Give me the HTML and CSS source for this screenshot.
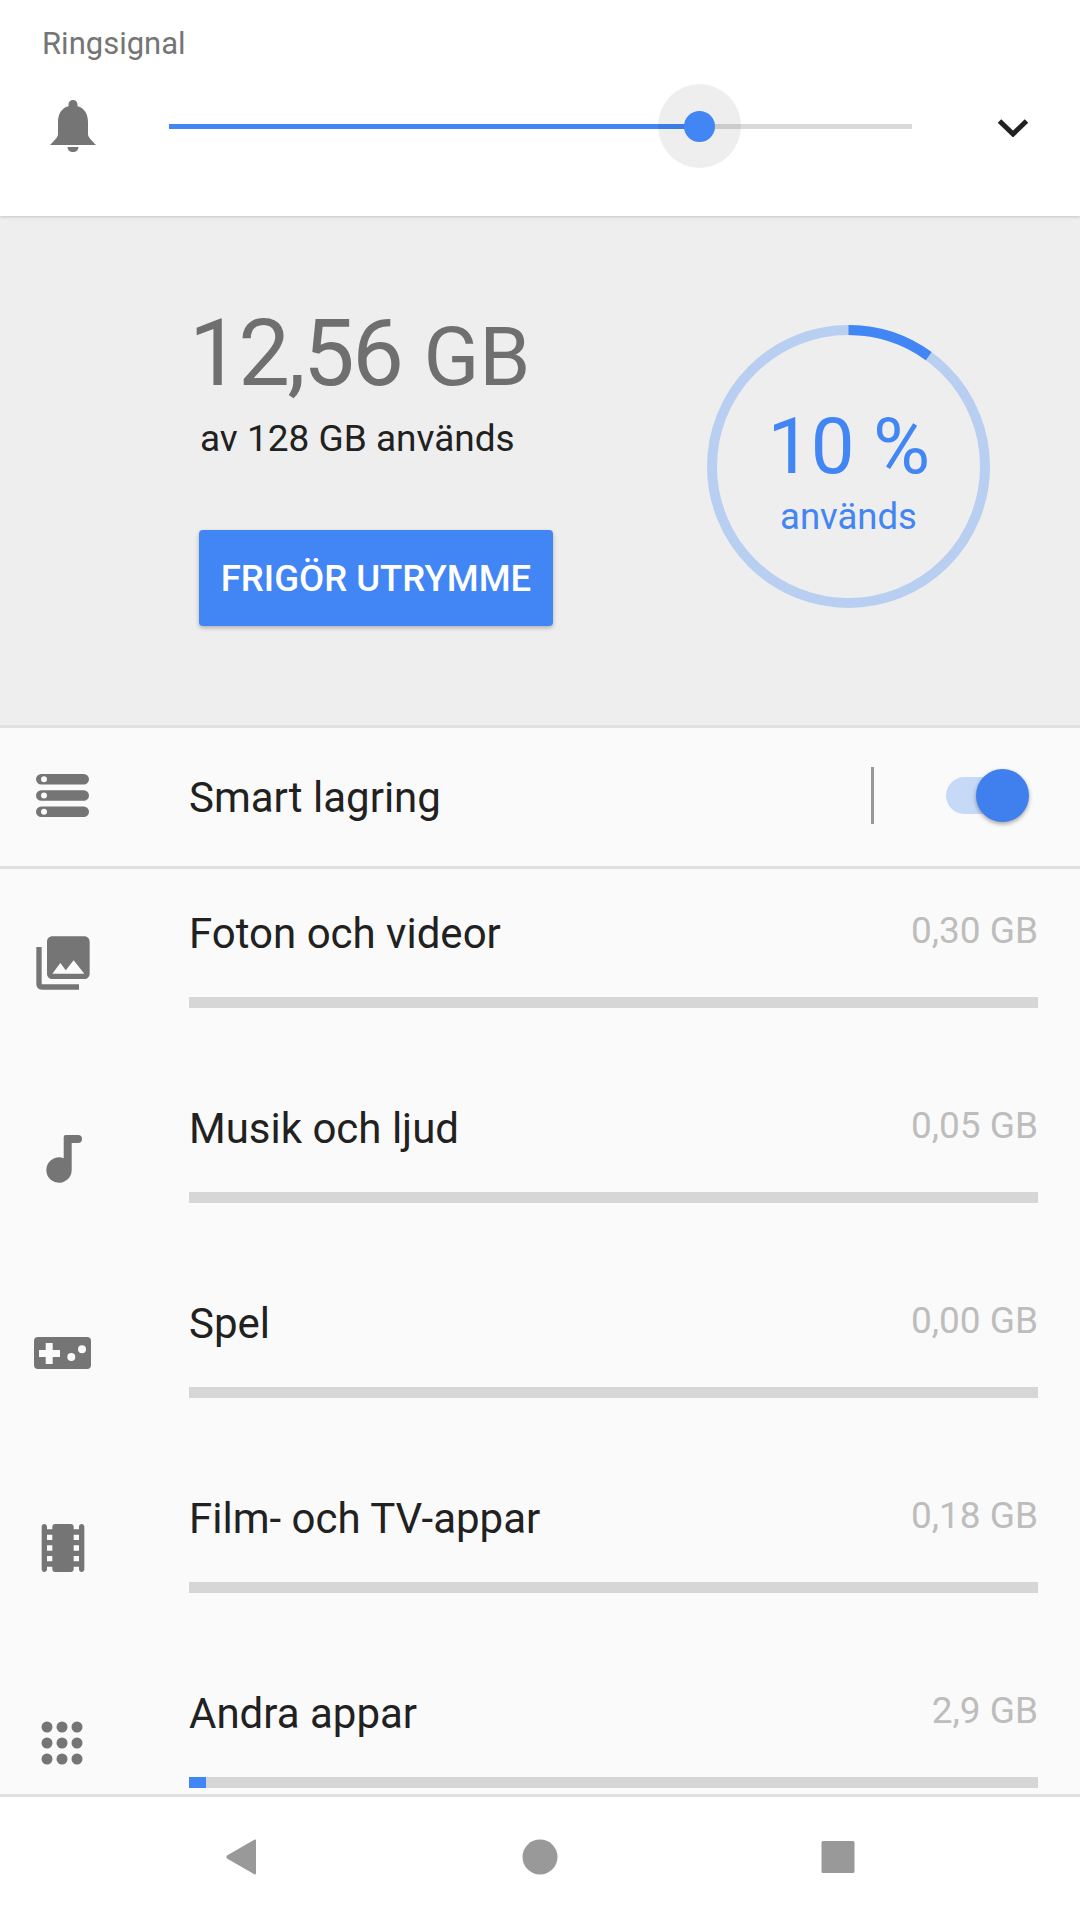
FILE: index.html
```html
<!DOCTYPE html>
<html lang="sv">
<head>
<meta charset="utf-8">
<title>Lagring</title>
<link rel="stylesheet" href="styles.css">
</head>
<body>
<div class="screen">
  <header class="volume">
    <div class="volume-label">Ringsignal</div>
    <div class="volume-row">
      <svg class="bell" viewBox="0 0 46 52"><path fill="#757575" d="M23 0c2.600 0 4.500 2 4.500 4.500v1.700C34.500 8 38 14 38 22v12c0 3 3 6 8 11H0c5-5 8-8 8-11V22C8 14 11.500 8 18.500 6.200V4.500C18.500 2 20.400 0 23 0zM17.500 47h11c0 3-2.500 5-5.500 5s-5.500-2-5.500-5z"/></svg>
      <div class="slider">
        <div class="slider-fill"></div>
        <div class="slider-halo"><div class="slider-thumb"></div></div>
      </div>
      <svg class="chevron" viewBox="0 0 30 18"><path fill="none" stroke="#212121" stroke-width="5" d="M1.500 2 15 15 28.500 2"/></svg>
    </div>
  </header>

  <section class="summary">
    <div class="summary-left">
      <div class="used"><span class="used-num">12,56</span> <span class="used-unit">GB</span></div>
      <div class="used-of">av 128 GB används</div>
      <button class="free-btn">FRIGÖR UTRYMME</button>
    </div>
    <div class="ring">
      <svg class="ring-svg" viewBox="0 0 283 283">
        <circle cx="141.500" cy="141.500" r="136.500" fill="none" stroke="#b9cff1" stroke-width="10"/>
        <path d="M141.500 5A136.500 136.500 0 0 1 221.700 31.100" fill="none" stroke="#4285f4" stroke-width="10"/>
      </svg>
      <div class="ring-text">
        <div class="ring-pct">10 %</div>
        <div class="ring-sub">används</div>
      </div>
    </div>
  </section>

  <section class="smart">
    <svg class="smart-icon" viewBox="0 0 53 43">
      <path fill="#757575" fill-rule="evenodd" d="M5.300 0h42.400a5.300 5.300 0 0 1 0 10.600H5.300a5.300 5.300 0 0 1 0-10.600zM8 2.300a3 3 0 1 0 0 6 3 3 0 0 0 0-6zM5.300 16.200h42.400a5.300 5.300 0 0 1 0 10.600H5.300a5.300 5.300 0 0 1 0-10.600zM8 18.500a3 3 0 1 0 0 6 3 3 0 0 0 0-6zM5.300 32.400h42.400a5.300 5.300 0 0 1 0 10.600H5.300a5.300 5.300 0 0 1 0-10.600zM8 34.700a3 3 0 1 0 0 6 3 3 0 0 0 0-6z"/>
    </svg>
    <div class="smart-label">Smart lagring</div>
    <div class="smart-sep"></div>
    <div class="switch"><div class="switch-thumb"></div></div>
  </section>

  <section class="list">
    <div class="item">
      <svg class="item-icon" viewBox="0 0 24 24"><path fill="#757575" d="M22 16V4c0-1.100-.9-2-2-2H8c-1.100 0-2 .9-2 2v12c0 1.100.9 2 2 2h12c1.100 0 2-.9 2-2zm-11-4 2.030 2.710L16 11l4 5H8l3-4zM2 6v14c0 1.100.9 2 2 2h14v-2H4V6H2z"/></svg>
      <div class="item-body">
        <div class="item-head"><span class="item-name">Foton och videor</span><span class="item-size">0,30 GB</span></div>
        <div class="bar"></div>
      </div>
    </div>
    <div class="item">
      <svg class="item-icon" viewBox="0 0 64 64"><path fill="#757575" d="M32.700 11a2 2 0 0 1 2-2H47a4 4 0 0 1 0 8h-6.300v27a12.700 12.700 0 1 1-8-11.800z"/></svg>
      <div class="item-body">
        <div class="item-head"><span class="item-name">Musik och ljud</span><span class="item-size">0,05 GB</span></div>
        <div class="bar"></div>
      </div>
    </div>
    <div class="item">
      <svg class="item-icon" viewBox="0 0 64 64"><path fill="#757575" fill-rule="evenodd" d="M7 16h49a4 4 0 0 1 4 4v24a4 4 0 0 1-4 4H7a4 4 0 0 1-4-4V20a4 4 0 0 1 4-4zm7.700 6v7H8v7h6.700v7h7v-7H29v-7h-7.300v-7zM40.300 32a4 4 0 1 0 0 8 4 4 0 0 0 0-8zM51 24.300a4 4 0 1 0 0 8 4 4 0 0 0 0-8z"/></svg>
      <div class="item-body">
        <div class="item-head"><span class="item-name">Spel</span><span class="item-size">0,00 GB</span></div>
        <div class="bar"></div>
      </div>
    </div>
    <div class="item">
      <svg class="item-icon" viewBox="0 0 24 24"><path fill="#757575" d="M18 4v1h-2V4c0-.55-.45-1-1-1H9c-.55 0-1 .45-1 1v1H6V4c0-.55-.45-1-1-1s-1 .45-1 1v16c0 .55.450 1 1 1s1-.45 1-1v-1h2v1c0 .55.450 1 1 1h6c.55 0 1-.45 1-1v-1h2v1c0 .55.450 1 1 1s1-.45 1-1V4c0-.55-.45-1-1-1s-1 .45-1 1zM8 17H6v-2h2v2zm0-4H6v-2h2v2zm0-4H6V7h2v2zm10 8h-2v-2h2v2zm0-4h-2v-2h2v2zm0-4h-2V7h2v2z"/></svg>
      <div class="item-body">
        <div class="item-head"><span class="item-name">Film- och TV-appar</span><span class="item-size">0,18 GB</span></div>
        <div class="bar"></div>
      </div>
    </div>
    <div class="item">
      <svg class="item-icon" viewBox="0 0 64 64"><g fill="#757575"><circle cx="16" cy="16" r="5.500"/><circle cx="31" cy="16" r="5.500"/><circle cx="46" cy="16" r="5.500"/><circle cx="16" cy="32" r="5.500"/><circle cx="31" cy="32" r="5.500"/><circle cx="46" cy="32" r="5.500"/><circle cx="16" cy="48" r="5.500"/><circle cx="31" cy="48" r="5.500"/><circle cx="46" cy="48" r="5.500"/></g></svg>
      <div class="item-body">
        <div class="item-head"><span class="item-name">Andra appar</span><span class="item-size">2,9 GB</span></div>
        <div class="bar"><div class="bar-fill"></div></div>
      </div>
    </div>
  </section>

  <nav class="navbar">
    <svg class="nav-icon" viewBox="0 0 36 36"><path fill="#999" d="M32 1.500v33a1 1 0 0 1-1.700.7L3 19.500a2.200 2.200 0 0 1 0-3L30.300.8A1 1 0 0 1 32 1.500z"/></svg>
    <svg class="nav-icon" viewBox="0 0 36 36"><circle cx="18" cy="18" r="17.500" fill="#999"/></svg>
    <svg class="nav-icon" viewBox="0 0 36 36"><rect x="1.500" y="2" width="33" height="32" rx="1.500" fill="#999"/></svg>
  </nav>
</div>
</body>
</html>
```

FILE: styles.css
```css
* { box-sizing: border-box; }
html, body { margin: 0; padding: 0; }
body { font-family: Roboto, "Noto Sans", sans-serif; background: #fafafa; }
.screen { width: 1080px; height: 1920px; display: flex; flex-direction: column; overflow: hidden; }

.volume { height: 216px; flex: none; background: #fff; padding: 24px 0 0 42px; box-shadow: 0 1px 3px rgba(0,0,0,.18); position: relative; z-index: 1; }
.volume-label { font-size: 31px; line-height: 40px; color: #757575; }
.volume-row { display: flex; align-items: center; height: 124px; }
.bell { width: 46px; height: 52px; margin-left: 8px; flex: none; }
.slider { width: 743px; height: 5px; margin-left: 73px; background: #dadada; position: relative; flex: none; }
.slider-fill { width: 531px; height: 100%; background: #4285f4; }
.slider-halo { position: absolute; left: 489px; top: -39.500px; width: 83px; height: 84px; border-radius: 50%; background: rgba(0,0,0,.065); display: flex; align-items: center; justify-content: center; }
.slider-thumb { width: 31px; height: 31px; border-radius: 50%; background: #4285f4; }
.chevron { width: 30px; height: 18px; margin: 3px 0 0 86px; flex: none; }

.summary { height: 509px; flex: none; background: #eee; display: flex; padding: 92px 0 0 189px; }
.summary-left { width: 518px; flex: none; }
.used { color: #6f6f6f; line-height: 92px; white-space: nowrap; }
.used-num { font-size: 92px; letter-spacing: -2.500px; }
.used-unit { font-size: 82px; margin-left: 18px; }
.used-of { font-size: 37px; line-height: 46px; color: #212121; margin: -10px 0 0 11px; }
.free-btn { display: block; margin: 68px 0 0 10px; width: 354px; height: 96px; padding: 0; border: 0; border-radius: 4px; background: #4285f4; color: #fff; font: 500 36.500px Roboto, sans-serif; box-shadow: 0 2px 4px rgba(0,0,0,.25); }
.ring { position: relative; width: 283px; height: 283px; margin: 17px 0 0 0; flex: none; }
.ring-svg { display: block; width: 283px; height: 283px; }
.ring-text { position: absolute; left: 0; right: 0; top: 77px; text-align: center; color: #4285f4; }
.ring-pct { font-size: 78px; line-height: 90px; letter-spacing: -.5px; }
.ring-sub { font-size: 36.500px; line-height: 46px; margin-top: 2px; }

.smart { height: 144px; flex: none; background: #fafafa; border-top: 3px solid #e0e0e0; border-bottom: 3px solid #e0e0e0; display: flex; align-items: center; padding: 0 0 3px 36px; }
.smart-icon { width: 53px; height: 43px; flex: none; }
.smart-label { font-size: 42px; line-height: 56px; color: #212121; margin: 4px 0 0 100px; width: 682px; flex: none; }
.smart-sep { width: 3px; height: 57px; background: #999; flex: none; }
.switch { width: 64px; height: 37px; margin-left: 72px; border-radius: 19px; background: #c6d9f7; position: relative; flex: none; }
.switch-thumb { position: absolute; right: -19px; top: -8px; width: 53px; height: 53px; border-radius: 50%; background: #3f80ee; box-shadow: 0 2px 4px rgba(0,0,0,.35); }

.list { height: 925px; flex: none; overflow: hidden; background: #fafafa; }
.item { height: 195px; display: flex; padding-left: 31px; }
.item-icon { width: 64px; height: 64px; margin-top: 62px; flex: none; }
.item-body { width: 849px; margin-left: 94px; padding-top: 37px; flex: none; }
.item-head { display: flex; justify-content: space-between; align-items: baseline; height: 91px; line-height: 56px; }
.item-name { font-size: 42px; color: #212121; }
.item-size { font-size: 37px; color: #bdbdbd; position: relative; top: -5px; }
.bar { height: 11px; background: #d6d6d6; }
.bar-fill { width: 17px; height: 100%; background: #4285f4; }

.navbar { flex: 1; background: #fff; border-top: 3px solid #e0e0e0; display: flex; justify-content: center; gap: 262px; align-items: center; padding: 0 0 3px 0; }
.nav-icon { width: 36px; height: 36px; flex: none; }
```
